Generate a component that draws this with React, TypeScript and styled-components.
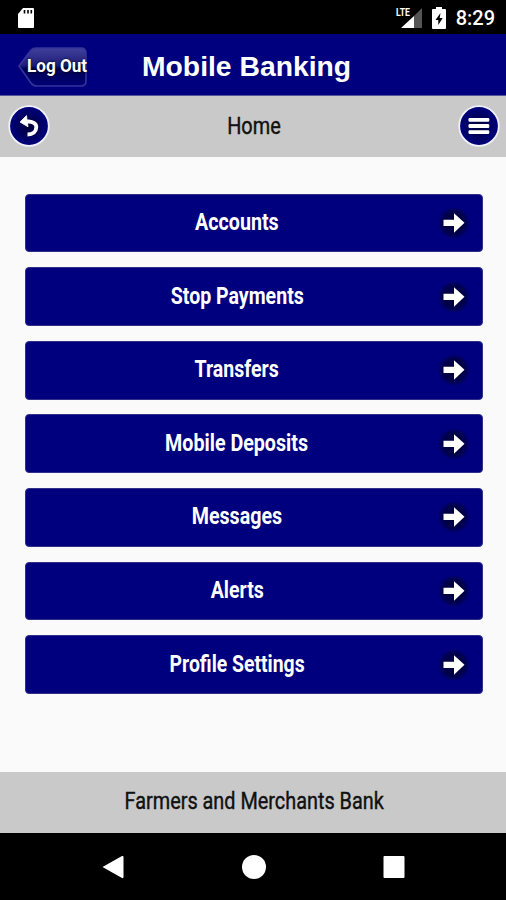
import React from "react";
import styled, { createGlobalStyle } from "styled-components";

const GlobalStyle = createGlobalStyle`
  * { box-sizing: border-box; }
  body { margin: 0; background: #000; }
`;

const Screen = styled.div`
  width: 506px;
  height: 900px;
  display: flex;
  flex-direction: column;
  background: #fafafa;
  font-family: Roboto, "Liberation Sans", sans-serif;
  overflow: hidden;
`;

const StatusBar = styled.div`
  height: 34px;
  flex: none;
  background: #000;
  display: flex;
  align-items: center;
  padding: 1px 11px 0 17px;
  color: #fff;
`;

const Spacer = styled.div`
  flex: 1;
`;

const Clock = styled.span`
  font-size: 20px;
  font-weight: 500;
  line-height: 32px;
  margin-left: 10px;
`;

const Header = styled.header`
  height: 62px;
  flex: none;
  background: #00007e;
  border-bottom: 1px solid #55559c;
  display: grid;
  grid-template-columns: 142px 1fr;
  align-items: center;
`;

const LogOut = styled.button`
  position: relative;
  width: 70px;
  height: 42px;
  margin: 4px 0 0 17px;
  padding: 0;
  border: 0;
  background: none;
  color: #fff;
  svg { display: block; }
`;

const LogOutText = styled.span`
  position: absolute;
  left: 10px;
  top: 9px;
  font: bold 18px/22px Roboto, sans-serif;
  white-space: nowrap;
  transform: scaleX(0.95);
  transform-origin: left;
  text-shadow: 0 0 3px #000;
`;

const Title = styled.h1`
  margin: 3px 0 0;
  color: #fff;
  font: bold 28.3px/36px "Liberation Sans", Arial, sans-serif;
`;

const SubBar = styled.div`
  height: 61px;
  flex: none;
  background: #c9c9c9;
  display: flex;
  align-items: center;
  justify-content: space-between;
  padding: 0 6.5px 1px 7.5px;
`;

const Condensed = styled.span<{ $scale: number }>`
  display: inline-block;
  white-space: nowrap;
  transform: scaleX(${(p) => p.$scale});
`;

const PageName = styled.h2`
  margin: 0;
  color: #111;
  font-size: 23px;
  font-weight: 400;
  -webkit-text-stroke: 0.4px #111;
`;

const RoundButton = styled.button`
  width: 42px;
  height: 42px;
  padding: 0;
  border: 0;
  background: none;
  svg { display: block; }
`;

const Menu = styled.nav`
  flex: 1;
  display: flex;
  flex-direction: column;
  gap: 14.8px;
  padding: 36.6px 23.5px 0 24.5px;
`;

const MenuItem = styled.button`
  height: 58.8px;
  flex: none;
  display: grid;
  grid-template-columns: 1fr 34px;
  align-items: center;
  padding: 0 11px 0 0;
  border: 1px solid #30308c;
  border-radius: 4px;
  background: #00007e;
  color: #fff;
`;

const MenuLabel = styled.span`
  font: bold 23px/28px Roboto, sans-serif;
  text-align: center;
  padding: 0 0 0 12px;
`;

const Footer = styled.footer`
  height: 61px;
  flex: none;
  background: #c9c9c9;
  color: #111;
  display: flex;
  justify-content: center;
  align-items: center;
  padding: 0 0 3px 2px;
  font-size: 23px;
  -webkit-text-stroke: 0.4px #111;
`;

const NavBar = styled.div`
  height: 67px;
  flex: none;
  background: #000;
  display: flex;
  justify-content: space-between;
  align-items: center;
  padding: 0 100px 0 101px;
`;

const items: { label: string; scale: number }[] = [
  { label: "Accounts", scale: 0.855 },
  { label: "Stop Payments", scale: 0.85 },
  { label: "Transfers", scale: 0.85 },
  { label: "Mobile Deposits", scale: 0.855 },
  { label: "Messages", scale: 0.855 },
  { label: "Alerts", scale: 0.85 },
  { label: "Profile Settings", scale: 0.843 },
];

const SdCard = () => (
  <svg width="18" height="22" viewBox="0 0 18 22">
    <path d="M6 1H16Q17 1 17 2V20Q17 21 16 21H2Q1 21 1 20V7Z" fill="#fff" />
    <path d="M7.5 3v3.5M11 3v3.5M14.3 3v3.5" stroke="#000" strokeWidth="1.6" />
  </svg>
);

const SignalText = styled.text`
  font: bold 11px Roboto, sans-serif;
  fill: #fff;
`;

const Signal = () => (
  <svg width="28" height="22" viewBox="0 0 28 22">
    <path d="M27 1V21H19V9Z" fill="#555" />
    <path d="M6 21L19 9V21Z" fill="#fff" />
    <SignalText x="1" y="9" textLength="14" lengthAdjust="spacingAndGlyphs">LTE</SignalText>
  </svg>
);

const Battery = () => (
  <svg width="14" height="22" viewBox="0 0 14 22">
    <path d="M4 0H10V2H13Q14 2 14 3V21Q14 22 13 22H1Q0 22 0 21V3Q0 2 1 2H4Z" fill="#fff" />
    <path d="M8.5 6L3.5 13H6.3V18L10.7 11H7.7Z" fill="#000" />
  </svg>
);

const BatterySlot = styled.span`
  display: flex;
  margin-left: 9px;
`;

const LogOutShape = () => (
  <svg width="70" height="42" viewBox="0 0 70 42">
    <defs>
      <linearGradient id="gloss" x1="0" y1="0" x2="0" y2="1">
        <stop offset="0" stopColor="#403f9a" />
        <stop offset="0.45" stopColor="#20207c" />
        <stop offset="0.55" stopColor="#000052" />
        <stop offset="1" stopColor="#000078" />
      </linearGradient>
    </defs>
    <path
      d="M2 20L14 4Q16 2 19 2H64Q69 2 69 7V35Q69 40 64 40H20Q16 40 14 37Z"
      fill="url(#gloss)"
      stroke="#34349c"
      strokeWidth="1.6"
    />
  </svg>
);

const Disc = ({ id }: { id: string }) => (
  <>
    <defs>
      <radialGradient id={id}>
        <stop offset="0" stopColor="#000034" />
        <stop offset="0.55" stopColor="#000060" />
        <stop offset="1" stopColor="#00007e" />
      </radialGradient>
    </defs>
    <circle cx="21" cy="21" r="19.8" fill={`url(#${id})`} stroke="#f0f0fa" strokeWidth="1.8" />
  </>
);

const BackIcon = () => (
  <svg width="42" height="42" viewBox="0 0 42 42">
    <Disc id="backDisc" />
    <path d="M17 16.8C25 15.500 28.600 19 28.300 22.500C28 26.500 25 29.500 19.500 29.500" fill="none" stroke="#fff" strokeWidth="3.8" />
    <path d="M12 17L18.500 10.500L20 21.800Z" fill="#fff" stroke="#fff" strokeWidth="0.8" strokeLinejoin="round" />
  </svg>
);

const ListIcon = () => (
  <svg width="42" height="42" viewBox="0 0 42 42">
    <Disc id="listDisc" />
    <g fill="#fff">
      <rect x="10.500" y="13" width="20.800" height="3.800" rx="1.200" />
      <rect x="10.500" y="19.100" width="20.800" height="3.800" rx="1.200" />
      <rect x="10.500" y="25.200" width="20.800" height="3.800" rx="1.200" />
    </g>
  </svg>
);

const ArrowIcon = () => (
  <svg width="34" height="34" viewBox="0 0 34 34">
    <defs>
      <radialGradient id="arrowHalo">
        <stop offset="0" stopColor="#000030" />
        <stop offset="0.7" stopColor="#00004c" />
        <stop offset="0.9" stopColor="#000068" />
        <stop offset="1" stopColor="#00007e" />
      </radialGradient>
    </defs>
    <circle cx="17" cy="17" r="16" fill="url(#arrowHalo)" />
    <path d="M6.5 13.700H17V7.2L27.500 16.800L17 26.700V20H6.5Z" fill="#fff" />
  </svg>
);

export default function App() {
  return (
    <>
      <GlobalStyle />
      <Screen>
        <StatusBar>
          <SdCard />
          <Spacer />
          <Signal />
          <BatterySlot>
            <Battery />
          </BatterySlot>
          <Clock>8:29</Clock>
        </StatusBar>
        <Header>
          <LogOut>
            <LogOutShape />
            <LogOutText>Log Out</LogOutText>
          </LogOut>
          <Title>Mobile Banking</Title>
        </Header>
        <SubBar>
          <RoundButton aria-label="Back">
            <BackIcon />
          </RoundButton>
          <PageName>
            <Condensed $scale={0.865}>Home</Condensed>
          </PageName>
          <RoundButton aria-label="Menu">
            <ListIcon />
          </RoundButton>
        </SubBar>
        <Menu>
          {items.map((item) => (
            <MenuItem key={item.label}>
              <MenuLabel>
                <Condensed $scale={item.scale}>{item.label}</Condensed>
              </MenuLabel>
              <ArrowIcon />
            </MenuItem>
          ))}
        </Menu>
        <Footer>
          <Condensed $scale={0.863}>Farmers and Merchants Bank</Condensed>
        </Footer>
        <NavBar>
          <svg width="24" height="26" viewBox="0 0 24 26">
            <path d="M1.5 13L21 2Q22.500 1.500 22.500 3V23Q22.500 24.500 21 24Z" fill="#fff" />
          </svg>
          <svg width="26" height="26" viewBox="0 0 26 26">
            <circle cx="13" cy="13" r="12" fill="#fff" />
          </svg>
          <svg width="24" height="26" viewBox="0 0 24 26">
            <rect x="1.500" y="2" width="21" height="22" rx="1" fill="#fff" />
          </svg>
        </NavBar>
      </Screen>
    </>
  );
}
